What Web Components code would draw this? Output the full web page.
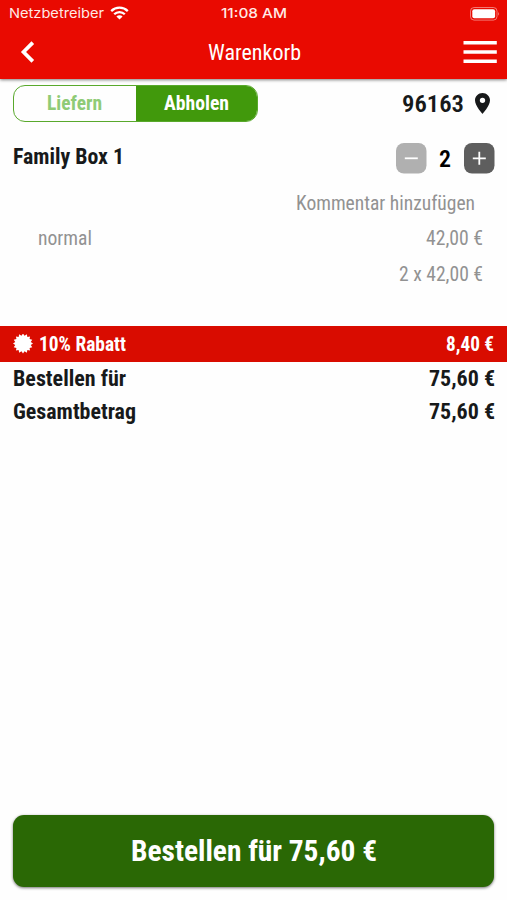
<!DOCTYPE html>
<html lang="de">
<head>
<meta charset="utf-8">
<title>Warenkorb</title>
<style>
  body {
    margin: 0;
    background: #fefefe;
    color: #17191a;
    font-family: "Roboto Condensed", Roboto, "Liberation Sans", sans-serif;
  }
</style>
</head>
<body>
<cart-page>
  <cart-header slot="header" carrier="Netzbetreiber" time="11:08 AM" heading="Warenkorb"></cart-header>
  <order-type zip="96163"></order-type>
  <cart-item name="Family Box 1" count="2"></cart-item>
  <item-detail><fit-text slot="end" class="comment" size="20" width="179">Kommentar hinzufügen</fit-text></item-detail>
  <item-detail>
    <fit-text size="20" width="54">normal</fit-text>
    <fit-text slot="end" size="20" width="57">42,00 €</fit-text>
  </item-detail>
  <item-detail><fit-text slot="end" size="20" width="84">2 x 42,00 €</fit-text></item-detail>
  <discount-bar>
    <fit-text size="19.3" width="87" weight="700">10% Rabatt</fit-text>
    <fit-text slot="end" size="19.3" width="48" weight="700">8,40 €</fit-text>
  </discount-bar>
  <total-row>
    <fit-text size="22" width="113" weight="700">Bestellen für</fit-text>
    <fit-text slot="end" size="22" width="66" weight="700">75,60 €</fit-text>
  </total-row>
  <total-row>
    <fit-text size="22" width="123" weight="700">Gesamtbetrag</fit-text>
    <fit-text slot="end" size="22" width="66" weight="700">75,60 €</fit-text>
  </total-row>
  <order-button slot="footer"><fit-text size="29.5" width="246" weight="700">Bestellen für 75,60 €</fit-text></order-button>
</cart-page>

<script>
// One line of text, condensed to a given width and centred on its cap height
class FitText extends HTMLElement {
  constructor() {
    super();
    this.attachShadow({ mode: 'open' });
  }

  connectedCallback() {
    const size = Number(this.getAttribute('size'));
    const width = Number(this.getAttribute('width'));
    const weight = this.getAttribute('weight') || 400;
    const height = Math.round(size * 1.2);

    this.shadowRoot.innerHTML = `
      <style>
        :host { display: block; flex: none; }
        svg { display: block; overflow: visible; }
        text { fill: currentColor; font-size: ${size}px; font-weight: ${weight}; font-stretch: 75%; }
      </style>
      <svg width="${width}" height="${height}">
        <text x="0" y="${height / 2 + size * 0.3555 - 0.3}" textLength="${width}" lengthAdjust="spacingAndGlyphs"></text>
      </svg>
    `;
    this.shadowRoot.querySelector('text').textContent = this.textContent;
  }
}

class CartPage extends HTMLElement {
  constructor() {
    super();
    this.attachShadow({ mode: 'open' });
    this.shadowRoot.innerHTML = `
      <style>
        :host { display: flex; flex-direction: column; height: 900px; }
        footer { margin-top: auto; padding: 0 13px 13px; }
      </style>
      <slot name="header"></slot>
      <main><slot></slot></main>
      <footer><slot name="footer"></slot></footer>
    `;
  }
}

class CartHeader extends HTMLElement {
  constructor() {
    super();
    this.attachShadow({ mode: 'open' });
  }

  connectedCallback() {
    this.shadowRoot.innerHTML = `
      <style>
        :host {
          display: block;
          height: 79px;
          background: #e90a01;
          color: #fff;
          box-shadow: 0 1px 3px rgba(0, 0, 0, 0.5);
        }
        .status, .bar { display: grid; grid-template-columns: 1fr auto 1fr; align-items: center; }
        .status { height: 28px; padding: 0 6px 0 9px; font-family: Inter, sans-serif; color: #ffe9e6; }
        .carrier { display: flex; align-items: center; gap: 6px; }
        .carrier svg { margin-bottom: 2px; }
        .bar { height: 47px; padding: 0 10px 0 20px; }
        .status > :last-child, .bar > :last-child { justify-self: end; }
        .time { margin-right: 2px; }
        .heading { margin-right: 9px; }
        svg { display: block; }
      </style>
      <div class="status">
        <div class="carrier">
          <fit-text size="13.3" width="95">${this.getAttribute('carrier')}</fit-text>
          <svg width="19" height="14" viewBox="0 0 19 14" fill="none" stroke="#fff" stroke-width="2.3">
            <path d="M1.2 5.1a11.8 11.8 0 0 1 16.6 0M4.2 8.3a7.5 7.5 0 0 1 10.6 0"/>
            <path d="M9.5 13.5 6.4 10.5a4.4 4.4 0 0 1 6.2 0z" fill="#fff" stroke="none"/>
          </svg>
        </div>
        <fit-text class="time" size="13.3" width="66" weight="500">${this.getAttribute('time')}</fit-text>
        <svg width="31" height="14" viewBox="0 0 31 14">
          <rect x="0.5" y="0.5" width="26.5" height="12.6" rx="3.6" fill="none" stroke="#fff" stroke-opacity="0.45"/>
          <rect x="2.3" y="2.3" width="22.8" height="9" rx="2" fill="#fff"/>
          <path d="M28.2 4.8q1.8 2 0 4z" fill="#fff" fill-opacity="0.5"/>
        </svg>
      </div>
      <div class="bar">
        <svg width="16" height="24" viewBox="0 0 16 24" fill="none" stroke="#fff" stroke-width="3.7">
          <path d="M12.8 2.6 3.5 12l9.3 9.4"/>
        </svg>
        <fit-text class="heading" size="22" width="93">${this.getAttribute('heading')}</fit-text>
        <svg width="34" height="24" viewBox="0 0 34 24" fill="#fff">
          <path d="M.5 1h33.3v3.6H.5zM.5 10.2h33.3v3.6H.5zM.5 19.4h33.3V23H.5z"/>
        </svg>
      </div>
    `;
  }
}

class OrderType extends HTMLElement {
  constructor() {
    super();
    this.attachShadow({ mode: 'open' });
  }

  connectedCallback() {
    this.shadowRoot.innerHTML = `
      <style>
        :host { display: flex; align-items: center; justify-content: space-between; height: 49px; padding: 0 17px 0 13px; }
        .toggle {
          display: grid;
          grid-template-columns: 122px 1fr;
          box-sizing: border-box;
          width: 245px;
          height: 37px;
          border: 1.3px solid #59a92c;
          border-radius: 12px;
          overflow: hidden;
        }
        .toggle div { display: flex; align-items: center; justify-content: center; padding-bottom: 1.5px; }
        .deliver { padding-right: 1px; color: #8fcb76; }
        .pickup { background: #41990c; color: #fff; }
        .zip { display: flex; align-items: center; gap: 11px; }
      </style>
      <div class="toggle">
        <div class="deliver"><fit-text size="19.8" width="55" weight="700">Liefern</fit-text></div>
        <div class="pickup"><fit-text size="19.8" width="65" weight="700">Abholen</fit-text></div>
      </div>
      <div class="zip">
        <fit-text size="23.6" width="62" weight="650">${this.getAttribute('zip')}</fit-text>
        <svg width="15" height="21" viewBox="5 2 14 20" preserveAspectRatio="none" fill="currentColor">
          <path d="M12 2C8.13 2 5 5.13 5 9c0 5.25 7 13 7 13s7-7.75 7-13c0-3.87-3.13-7-7-7zm0 9.5a2.5 2.5 0 1 1 0-5 2.5 2.5 0 0 1 0 5z"/>
        </svg>
      </div>
    `;
  }
}

class CartItem extends HTMLElement {
  constructor() {
    super();
    this.attachShadow({ mode: 'open' });
  }

  connectedCallback() {
    this.shadowRoot.innerHTML = `
      <style>
        :host { display: flex; align-items: center; justify-content: space-between; height: 57px; padding: 0 12px 0 13px; }
        .name { padding-bottom: 2px; }
        .stepper { display: flex; align-items: center; gap: 12.5px; padding-top: 4px; color: #000; }
        .count { margin: 0 1px 0 -1px; }
        svg { display: block; fill: #b0b0b0; stroke: #fff; stroke-width: 1.8; }
        .plus { fill: #5e5e5e; }
        rect { stroke: none; }
      </style>
      <fit-text class="name" size="22" width="111" weight="700">${this.getAttribute('name')}</fit-text>
      <div class="stepper">
        <svg width="31" height="31"><rect width="30.5" height="30.5" rx="8"/><path d="M8.8 15.3h13"/></svg>
        <fit-text class="count" size="23.6" width="12" weight="650">${this.getAttribute('count')}</fit-text>
        <svg class="plus" width="31" height="31"><rect width="30.5" height="30.5" rx="8"/><path d="M8.8 15.3h13M15.3 8.8v13"/></svg>
      </div>
    `;
  }
}

class ItemDetail extends HTMLElement {
  constructor() {
    super();
    this.attachShadow({ mode: 'open' });
    this.shadowRoot.innerHTML = `
      <style>
        :host {
          display: flex;
          align-items: center;
          justify-content: space-between;
          height: 35.5px;
          padding: 0 24.5px 0 37.5px;
          color: #929292;
        }
        ::slotted(.comment) { margin-right: 8px; }
      </style>
      <div><slot></slot></div>
      <slot name="end"></slot>
    `;
  }
}

class DiscountBar extends HTMLElement {
  constructor() {
    super();
    this.attachShadow({ mode: 'open' });
    this.shadowRoot.innerHTML = `
      <style>
        :host {
          display: flex;
          align-items: center;
          justify-content: space-between;
          height: 36px;
          margin-top: 34.5px;
          padding: 0 13px;
          background: #d90c00;
          color: #fff;
        }
        .label { display: flex; align-items: center; gap: 6px; }
      </style>
      <div class="label">
        <svg width="20" height="20" viewBox="-10 -9.5 20 20" fill="#fff"><polygon/></svg>
        <slot></slot>
      </div>
      <slot name="end"></slot>
    `;

    // badge with 16 teeth
    const points = [];
    for (let i = 0; i < 32; i++) {
      const r = i % 2 ? 7.9 : 10;
      const a = (i * Math.PI) / 16;
      points.push(`${(r * Math.cos(a)).toFixed(2)},${(r * Math.sin(a)).toFixed(2)}`);
    }
    this.shadowRoot.querySelector('polygon').setAttribute('points', points.join(' '));
  }
}

class TotalRow extends HTMLElement {
  constructor() {
    super();
    this.attachShadow({ mode: 'open' });
    this.shadowRoot.innerHTML = `
      <style>
        :host {
          display: flex;
          align-items: center;
          justify-content: space-between;
          box-sizing: border-box;
          height: 33px;
          padding: 0 12.5px 2px 13px;
        }
      </style>
      <slot></slot>
      <slot name="end"></slot>
    `;
  }
}

class OrderButton extends HTMLElement {
  constructor() {
    super();
    this.attachShadow({ mode: 'open' });
    this.shadowRoot.innerHTML = `
      <style>
        :host {
          display: flex;
          align-items: center;
          justify-content: center;
          box-sizing: border-box;
          height: 72px;
          padding-bottom: 2px;
          border-radius: 11px;
          background: #2a6805;
          color: #fff;
          box-shadow: 0 1px 3px rgba(0, 0, 0, 0.55);
        }
      </style>
      <slot></slot>
    `;
  }
}

customElements.define('fit-text', FitText);
customElements.define('cart-page', CartPage);
customElements.define('cart-header', CartHeader);
customElements.define('order-type', OrderType);
customElements.define('cart-item', CartItem);
customElements.define('item-detail', ItemDetail);
customElements.define('discount-bar', DiscountBar);
customElements.define('total-row', TotalRow);
customElements.define('order-button', OrderButton);
</script>
</body>
</html>
